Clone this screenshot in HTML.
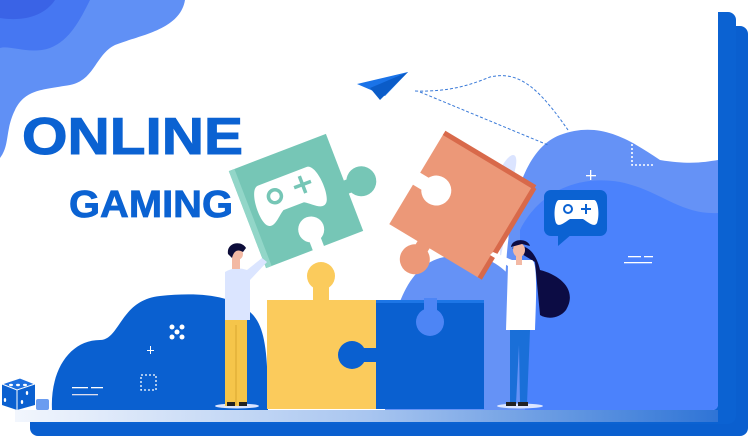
<!DOCTYPE html>
<html><head><meta charset="utf-8"><style>
html,body{margin:0;padding:0;background:#fff;}
svg{display:block}
</style></head><body>
<svg width="748" height="436" viewBox="0 0 748 436" xmlns="http://www.w3.org/2000/svg">
<defs>
<linearGradient id="fl" x1="0" x2="1" y1="0" y2="0">
<stop offset="0" stop-color="#f2f6fd"/><stop offset="0.5" stop-color="#a9c6f0"/><stop offset="1" stop-color="#2f74d6"/>
</linearGradient>
</defs>
<rect x="30" y="26" width="718" height="410" rx="8" fill="#0a5fcf"/>
<rect x="30" y="12" width="706" height="412" rx="8" fill="#0b62d2"/>
<rect x="0" y="0" width="718" height="410" rx="6" fill="#fff"/>
<path d="M0,0 H185 C180,30 140,35 115,45 C95,55 95,80 70,85 C40,90 25,90 15,110 C5,130 10,145 0,158 Z" fill="#6090f5"/>
<path d="M0,0 H90 C80,20 70,40 50,48 C30,55 10,45 0,48 Z" fill="#4677f2"/>
<path d="M0,0 H55 C45,15 25,22 0,18 Z" fill="#3a63e6"/>
<path d="M505,300 C505,220 520,150 560,135 C600,120 630,140 660,160 C690,165 705,162 718,160 V404 Q718,410 712,410 H505 Z" fill="#6592f6"/>
<path d="M520,410 V230 C540,190 580,175 620,182 C660,190 680,215 718,213 V404 Q718,410 712,410 Z" fill="#4b82fc"/>
<path d="M385,410 C385,330 400,270 440,258 C470,250 505,255 525,300 V410 Z" fill="#6592f6"/>
<path d="M500,170 C510,150 520,150 515,170 C510,200 505,240 500,260 Z" fill="#dbe4ff"/>
<path d="M52,410 C50,370 70,340 100,340 C120,340 120,300 160,296 C200,292 230,295 250,312 C265,325 268,350 268,410 Z" fill="#0a60d0"/>
<g fill="#fff">
<circle cx="172" cy="327" r="2.5"/><circle cx="182" cy="327" r="2.5"/><circle cx="177" cy="332" r="2.5"/><circle cx="172" cy="337" r="2.5"/><circle cx="182" cy="337" r="2.5"/>
<rect x="150" y="346" width="1" height="8"/><rect x="147" y="350" width="7" height="1"/>
</g>
<rect x="141" y="375" width="15" height="15" fill="none" stroke="#fff" stroke-width="1.3" stroke-dasharray="2 2"/>
<rect x="72" y="387" width="16" height="1.3" fill="#fff"/><rect x="91" y="387" width="12" height="1.3" fill="#fff"/><rect x="72" y="394" width="26" height="1.3" fill="#dde" />
<path d="M2,384 L20,378 L35,384 V405 L17,410 L2,405 Z" fill="#0a60d0"/>
<path d="M2,384 L20,378 L35,384 L17,390 Z" fill="#1d6fdf" stroke="#fff" stroke-width="1"/>
<line x1="17" y1="390" x2="17" y2="410" stroke="#fff" stroke-width="1"/>
<g fill="#fff"><ellipse cx="11" cy="385" rx="2" ry="1.2"/><ellipse cx="18" cy="385" rx="2" ry="1.2"/><ellipse cx="25" cy="385" rx="2" ry="1.2"/><ellipse cx="5" cy="400" rx="1.2" ry="2"/><ellipse cx="27" cy="393" rx="1.2" ry="2"/><ellipse cx="22" cy="402" rx="1.2" ry="2"/></g>
<rect x="36" y="399" width="13" height="11" rx="2" fill="#6a9cf0"/>
<rect x="15" y="410" width="703" height="12" fill="url(#fl)"/>
<text x="22" y="154" font-family="Liberation Sans, sans-serif" font-weight="bold" font-size="52" fill="#0b62d2" textLength="221" lengthAdjust="spacingAndGlyphs" stroke="#0b62d2" stroke-width="1">ONLINE</text>
<text x="69" y="217" font-family="Liberation Sans, sans-serif" font-weight="bold" font-size="38" fill="#0b62d2" textLength="164" lengthAdjust="spacingAndGlyphs" stroke="#0b62d2" stroke-width="0.8">GAMING</text>
<path d="M357,84 L408,72 L385,96 Z" fill="#1a73e8"/>
<path d="M370,88 L408,72 L380,100 Z" fill="#0b5cc8"/>
<path d="M415,91 C450,92 470,85 490,77 C520,70 540,90 568,130" fill="none" stroke="#3a7ad8" stroke-width="1" stroke-dasharray="3 2"/>
<path d="M420,92 L548,145" fill="none" stroke="#3a7ad8" stroke-width="1" stroke-dasharray="3 2"/>
<path d="M632,144 V165 H654" fill="none" stroke="#fff" stroke-width="1.6" stroke-dasharray="2 2"/>
<rect x="590" y="170" width="1.3" height="10" fill="#fff"/><rect x="586" y="175" width="10" height="1.3" fill="#fff"/>
<rect x="628" y="256" width="13" height="1.3" fill="#fff"/><rect x="644" y="256" width="9" height="1.3" fill="#fff"/><rect x="624" y="262" width="28" height="1.3" fill="#fff"/>
<rect x="544" y="190" width="63" height="46" rx="7" fill="#0b62d2"/>
<path d="M558,234 V246 L572,234 Z" fill="#0b62d2"/>
<path d="M559,200 C555,200 553,215 556,223 C559,228 565,222 570,219 H583 C588,222 594,228 597,223 C600,215 598,200 594,200 Z" fill="#fff"/>
<circle cx="568" cy="209" r="4" fill="none" stroke="#0b62d2" stroke-width="2"/>
<path d="M586,204 V214 M581,209 H591" stroke="#0b62d2" stroke-width="2"/>
<rect x="267" y="300" width="110" height="109" fill="#fbcb5c"/>
<rect x="313" y="285" width="16" height="18" fill="#fbcb5c"/>
<circle cx="321" cy="276" r="14" fill="#fbcb5c"/>
<rect x="376" y="300" width="108" height="109" fill="#0a60d0"/>
<rect x="376" y="300" width="108" height="3" fill="#1d76e6"/>
<circle cx="430" cy="322" r="14" fill="#4d85f5"/>
<rect x="424" y="298" width="13" height="12" fill="#4d85f5"/>
<circle cx="352" cy="355" r="14" fill="#0a60d0"/>
<rect x="360" y="348" width="18" height="14" fill="#0a60d0"/>
<g transform="translate(296,201) rotate(-21)">
<rect x="-52" y="-52" width="104" height="104" fill="#76c6b6"/>
<rect x="-52" y="-52" width="6" height="104" fill="#92d6c8"/>
<rect x="50" y="-2" width="12" height="14" fill="#76c6b6"/>
<circle cx="68" cy="5" r="15" fill="#76c6b6"/>
<path d="M-30,-28 C-40,-28 -42,4 -36,12 C-30,19 -22,8 -15,4 H7 C14,8 22,19 28,12 C34,4 32,-28 22,-28 Z" fill="#fff"/>
<circle cx="-18" cy="-12" r="6.5" fill="none" stroke="#76c6b6" stroke-width="3.5"/>
<path d="M12,-22 V-4 M3,-13 H21" stroke="#76c6b6" stroke-width="3.5"/>
<circle cx="4" cy="30" r="14" fill="#76c6b6"/>
<circle cx="4" cy="32" r="13" fill="#fff"/>
<rect x="-2" y="40" width="12" height="14" fill="#fff"/>
</g>
<g transform="translate(462,206) rotate(31)">
<rect x="-53" y="-53" width="106" height="106" fill="#ec9878"/>
<rect x="-53" y="-56" width="106" height="5" fill="#d8694a"/>
<rect x="50" y="-53" width="5" height="106" fill="#d8694a"/>
<circle cx="-30" cy="0" r="15" fill="#fff"/>
<rect x="-56" y="-7" width="24" height="14" fill="#fff"/>
<rect x="-20" y="50" width="14" height="12" fill="#ec9878"/>
<circle cx="-13" cy="70" r="15" fill="#ec9878"/>
</g>
<ellipse cx="237" cy="406" rx="22" ry="2.5" fill="#dbe5ff"/>
<rect x="225" y="318" width="22" height="88" fill="#f5c54a"/>
<rect x="235.5" y="325" width="1" height="80" fill="#d9a630"/>
<rect x="227" y="402" width="8" height="4" fill="#222"/><rect x="239" y="402" width="8" height="4" fill="#222"/>
<path d="M225,272 Q235,266 247,270 L262,258 L267,262 L250,280 V320 H225 Z" fill="#dbe5ff"/>
<rect x="232" y="257" width="8" height="12" fill="#f3b9a4"/>
<circle cx="237" cy="254" r="6" fill="#f3b9a4"/>
<path d="M228,254 C226,242 242,240 246,248 L243,252 C238,249 234,250 232,258 Z" fill="#0d0d3a"/>
<path d="M512,248 C530,240 538,260 540,270 C560,275 578,290 566,310 C560,318 548,320 540,315 L535,262 Z" fill="#0c0c44"/>
<ellipse cx="520" cy="406" rx="23" ry="2.5" fill="#dbe5ff"/>
<path d="M510,330 H530 L527,404 H520 L519,345 L516,404 H510 Z" fill="#1a6fd8"/>
<path d="M508,266 L490,255 L493,252 L512,260 H532 C538,262 536,300 535,330 H506 Z" fill="#fff"/>
<rect x="516" y="255" width="6" height="10" fill="#f3b9a4"/>
<ellipse cx="519" cy="250" rx="6" ry="7" fill="#f3b9a4"/>
<path d="M511,247 C512,238 528,238 530,246 L522,244 Z" fill="#0c0c44"/>
<rect x="506" y="402" width="10" height="4" fill="#222"/><rect x="518" y="402" width="10" height="4" fill="#222"/>
</svg>
</body></html>
